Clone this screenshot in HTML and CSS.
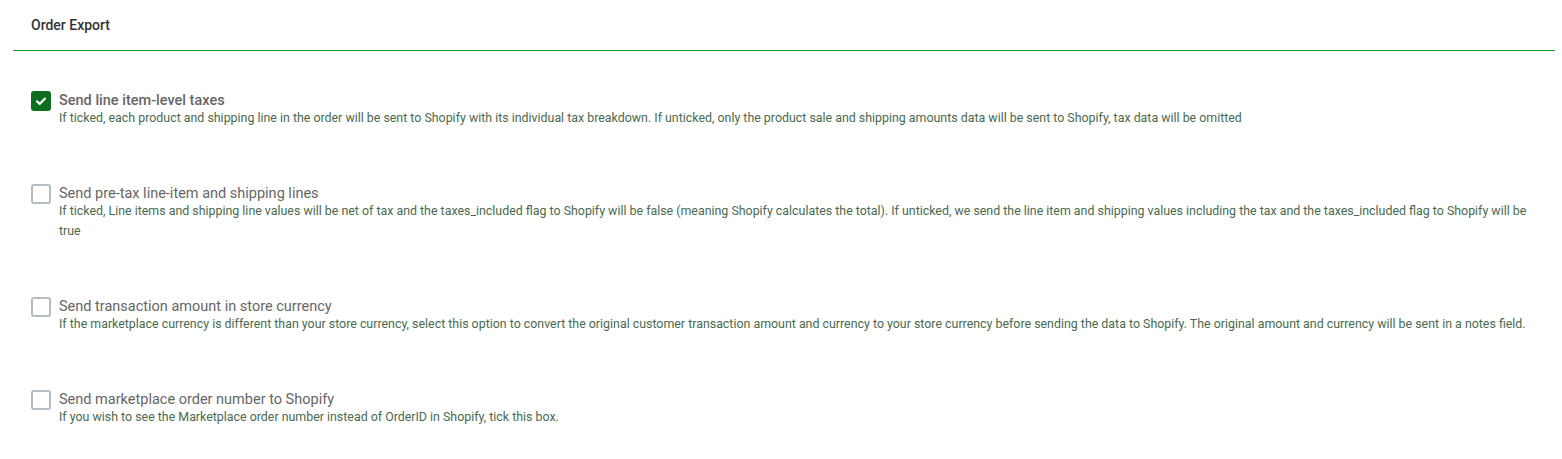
FILE: index.html
```html
<!DOCTYPE html>
<html>
<head>
<meta charset="utf-8">
<link rel="stylesheet" href="styles.css">
</head>
<body>
<div class="panel">
  <div class="header"><span class="title">Order Export</span></div>
  <div class="options">
    <div class="option">
      <span class="box checked"><svg viewBox="0 0 20 20" width="20" height="20"><path d="M6 10.3 L8.7 13 L14 7.6" fill="none" stroke="#fff" stroke-width="2.2" stroke-linecap="round" stroke-linejoin="round"/></svg></span>
      <div class="text">
        <div class="label strong">Send line item-level taxes</div>
        <div class="desc">If ticked, each product and shipping line in the order will be sent to Shopify with its individual tax breakdown. If unticked, only the product sale and shipping amounts data will be sent to Shopify, tax data will be omitted</div>
      </div>
    </div>
    <div class="option">
      <span class="box"></span>
      <div class="text">
        <div class="label">Send pre-tax line-item and shipping lines</div>
        <div class="desc">If ticked, Line items and shipping line values will be net of tax and the taxes_included flag to Shopify will be false (meaning Shopify calculates the total). If unticked, we send the line item and shipping values including the tax and the taxes_included flag to Shopify will be true</div>
      </div>
    </div>
    <div class="option">
      <span class="box"></span>
      <div class="text">
        <div class="label">Send transaction amount in store currency</div>
        <div class="desc">If the marketplace currency is different than your store currency, select this option to convert the original customer transaction amount and currency to your store currency before sending the data to Shopify. The original amount and currency will be sent in a notes field.</div>
      </div>
    </div>
    <div class="option">
      <span class="box"></span>
      <div class="text">
        <div class="label">Send marketplace order number to Shopify</div>
        <div class="desc">If you wish to see the Marketplace order number instead of OrderID in Shopify, tick this box.</div>
      </div>
    </div>
  </div>
</div>
</body>
</html>
```
FILE: styles.css
```css
* { box-sizing: border-box; }
html, body { margin: 0; padding: 0; background: #fff; }
body { font-family: Roboto, "Noto Sans", Arial, sans-serif; }
.panel { padding: 0 7px 0 13px; }
.header {
  height: 51px;
  border-bottom: 1px solid #0f9d2a;
  padding: 17px 18px 0;
}
.title { font-size: 14px; font-weight: 500; color: #333; line-height: 16px; display: block; }
.options { padding: 40px 18px 0; }
.option { display: flex; align-items: flex-start; gap: 8px; margin-bottom: 56px; }
.option:last-child { margin-bottom: 0; }
.box {
  flex: none;
  width: 20px; height: 20px;
  border: 2px solid #b4bcc2;
  border-radius: 3px;
  background: #fff;
}
.box.checked { background: #0d6e1f; border-color: #0d6e1f; position: relative; }
.box.checked svg { position: absolute; left: -2px; top: -2px; }
.text { flex: 1; padding-top: 1px; }
.label { font-size: 14.5px; color: #666; line-height: 18px; }
.label.strong { font-weight: 500; }
.desc { font-size: 12.4px; color: #4a6a50; line-height: 20px; margin-top: -2px; }
```
